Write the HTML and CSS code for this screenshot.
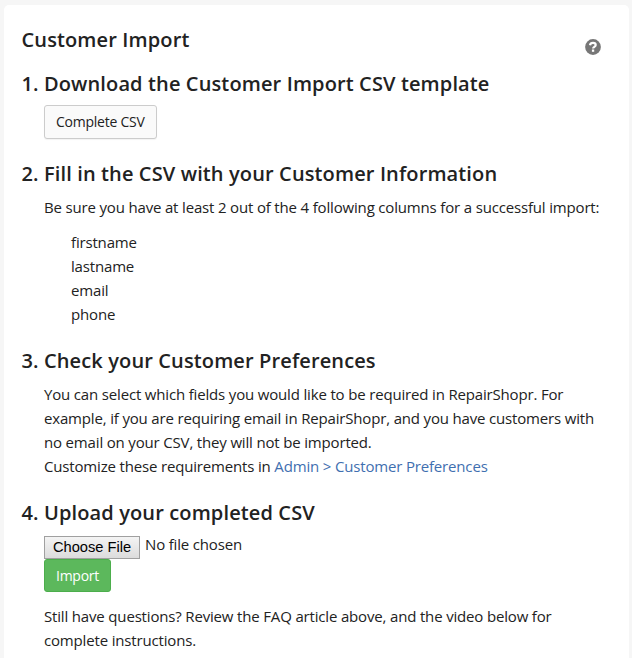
FILE: index.html
```
<!DOCTYPE html>
<html lang="en">
<head>
    <meta charset="UTF-8">
    <meta name="viewport" content="width=device-width, initial-scale=1.0">
    <title>Customer Import</title>
    <link rel="stylesheet" href="styles.css">
</head>
<body>
    <div class="widget">
        <div class="widget-header">
            <h3 class="title">Customer Import</h3>
            <a class="help" href="#" aria-label="Help">
                <svg width="16" height="16" viewBox="0 0 16 16">
                    <circle cx="8" cy="8" r="7.900" fill="#777"/>
                    <path d="M5 6.300C5.300 4.500 6.500 3.900 8 3.900c1.700 0 2.700.9 2.700 2.200 0 1.800-2.600 1.800-2.600 3.400" fill="none" stroke="#fff" stroke-width="2.200"/>
                    <rect x="6.900" y="10.500" width="2.300" height="2.300" fill="#fff"/>
                </svg>
            </a>
        </div>

        <h3 class="step step1">1. Download the Customer Import CSV template</h3>
        <div class="step-body">
            <a class="btn btn-default" href="#">Complete CSV</a>
        </div>

        <h3 class="step step2">2. Fill in the CSV with your Customer Information</h3>
        <div class="step-body">
            <p>Be sure you have at least 2 out of the 4 following columns for a successful import:</p>
            <ul class="columns">
                <li>firstname</li>
                <li>lastname</li>
                <li>email</li>
                <li>phone</li>
            </ul>
        </div>

        <h3 class="step step3">3. Check your Customer Preferences</h3>
        <div class="step-body">
            <p>You can select which fields you would like to be required in RepairShopr. For<br>
            example, if you are requiring email in RepairShopr, and you have customers with<br>
            no email on your CSV, they will not be imported.<br>
            Customize these requirements in <a class="link" href="#">Admin &gt; Customer Preferences</a></p>
        </div>

        <h3 class="step step4">4. Upload your completed CSV</h3>
        <div class="step-body">
            <div class="upload">
                <button class="choose" type="button">Choose File</button>
                <span class="file-name">No file chosen</span>
            </div>
            <button class="btn btn-success" type="submit">Import</button>
            <p class="questions">Still have questions? Review the FAQ article above, and the video below for<br>
            complete instructions.</p>
        </div>
    </div>
</body>
</html>
```
FILE: styles.css
```
* {
    box-sizing: border-box;
}
body {
    margin: 0;
    height: 658px;
    overflow: hidden;
    background: #f6f6f6;
    color: #222;
    font-family: "Open Sans", sans-serif;
    font-size: 15px;
    line-height: 24px;
    letter-spacing: -0.167px;
}
.widget {
    margin: 5px 3px 0 4px;
    height: 670px;
    padding: 20px 18px 0 17.5px;
    background: #fff;
    border-radius: 5px;
}
.widget-header {
    display: flex;
    justify-content: space-between;
}
.title,
.step {
    margin: 0;
    font-size: 20px;
    font-weight: 600;
    line-height: 30px;
    letter-spacing: 0.125px;
    white-space: nowrap;
}
.help {
    margin: 14px 10px 0 0;
    height: 16px;
    line-height: 0;
}
.step1 {
    margin-top: 14px;
}
.step2 {
    margin-top: 20px;
}
.step3 {
    margin-top: 20px;
}
.step4 {
    margin-top: 20px;
}
.step-body {
    padding-left: 22.5px;
    white-space: nowrap;
}
p {
    margin: 6px 0 0;
}
.columns {
    margin: 11px 0 0;
    padding: 0 0 0 27px;
    list-style: none;
}
.btn {
    display: block;
    padding: 0 11px;
    border: 1px solid #ccc;
    border-radius: 3px;
    font-family: "Open Sans", sans-serif;
    font-size: 14px;
    letter-spacing: -0.25px;
    text-decoration: none;
}
.btn-default {
    width: 113px;
    height: 34px;
    margin-top: 6px;
    line-height: 32px;
    background: #fafafa;
    color: #222;
    box-shadow: 0 1px 1px rgba(0,0,0,.05);
}
.btn-success {
    width: 67px;
    height: 33px;
    line-height: 31px;
    background: #5cb85c;
    border-color: #4cae4c;
    color: #fff;
}
.link {
    color: #3f6fb0;
    text-decoration: none;
}
.upload {
    display: flex;
    gap: 5px;
    height: 23px;
    margin-top: 8px;
}
.choose {
    height: 23px;
    width: 96px;
    padding: 0 0 1px;
    border: 1px solid #a0a0a0;
    border-radius: 0;
    background: linear-gradient(#f4f4f4, #dcdcdc);
    color: #000;
    font-family: "Liberation Sans", Arial, sans-serif;
    font-size: 14.67px;
    line-height: 19px;
}
.file-name {
    margin-top: -4px;
}
.questions {
    margin-top: 12px;
}
```
